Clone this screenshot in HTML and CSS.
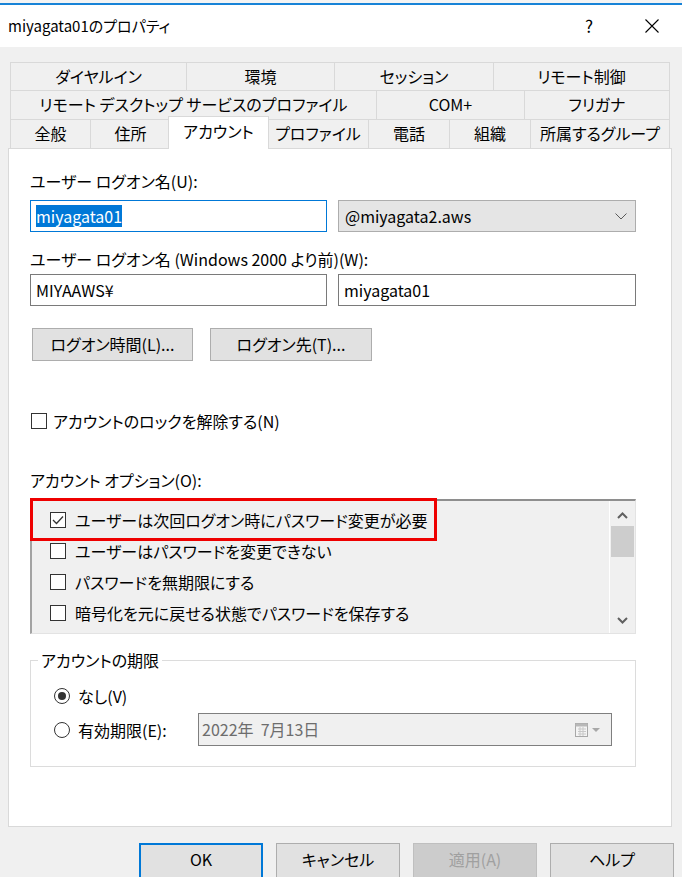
FILE: index.html
```html
<!DOCTYPE html>
<html lang="ja">
<head>
    <meta charset="UTF-8">
    <meta name="viewport" content="width=device-width, initial-scale=1.0">
    <title>miyagata01のプロパティ</title>
    <link rel="stylesheet" href="styles.css">
</head>
<body>

<div class="topedge"></div>
<div class="titlebar">
    <span class="title">miyagata01のプロパティ</span>
    <span class="help">?</span>
    <span class="close">
        <svg width="14" height="14" viewBox="0 0 14 14"><path d="M0.5 0.5 L13.5 13.5 M13.5 0.5 L0.5 13.5" stroke="#000" stroke-width="1.1" fill="none"/></svg>
    </span>
</div>

<div class="tabs">
    <div class="tabrow row1">
        <div class="tab t-dialin">ダイヤルイン</div>
        <div class="tab t-env">環境</div>
        <div class="tab t-session">セッション</div>
        <div class="tab t-remote last">リモート制御</div>
    </div>
    <div class="tabrow">
        <div class="tab t-rds">リモート デスクトップ サービスのプロファイル</div>
        <div class="tab t-com">COM+</div>
        <div class="tab t-kana last">フリガナ</div>
    </div>
    <div class="tabrow">
        <div class="tab t-general">全般</div>
        <div class="tab t-address">住所</div>
        <div class="tab t-account active">アカウント</div>
        <div class="tab t-profile">プロファイル</div>
        <div class="tab t-phone">電話</div>
        <div class="tab t-org">組織</div>
        <div class="tab t-member last">所属するグループ</div>
    </div>
</div>

<div class="panel">
    <div class="label first">ユーザー ログオン名(U):</div>
    <div class="fieldrow row-a">
        <div class="field focus"><span class="sel">miyagata01</span></div>
        <div class="field combo">
            <span>@miyagata2.aws</span>
            <svg width="12" height="7" viewBox="0 0 12 7"><polyline points="0.5,0.5 6,6 11.5,0.5" stroke="#5a5a5a" stroke-width="1" fill="none"/></svg>
        </div>
    </div>

    <div class="label second">ユーザー ログオン名 (Windows 2000 より前)(W):</div>
    <div class="fieldrow row-b">
        <div class="field">MIYAAWS¥</div>
        <div class="field">miyagata01</div>
    </div>

    <div class="btnrow">
        <div class="btn b-hours">ログオン時間(L)...</div>
        <div class="btn b-to">ログオン先(T)...</div>
    </div>

    <div class="check unlock">
        <span class="cb"></span>
        <span>アカウントのロックを解除する(N)</span>
    </div>

    <div class="label options">アカウント オプション(O):</div>
    <div class="list">
        <div class="items">
            <div class="check item">
                <span class="cb">
                    <svg width="14" height="14" viewBox="0 0 14 14"><polyline points="2,7 5.5,10.5 12,3.5" stroke="#333" stroke-width="1.3" fill="none"/></svg>
                </span>
                <span>ユーザーは次回ログオン時にパスワード変更が必要</span>
            </div>
            <div class="check item">
                <span class="cb"></span>
                <span>ユーザーはパスワードを変更できない</span>
            </div>
            <div class="check item">
                <span class="cb"></span>
                <span>パスワードを無期限にする</span>
            </div>
            <div class="check item">
                <span class="cb"></span>
                <span>暗号化を元に戻せる状態でパスワードを保存する</span>
            </div>
        </div>
        <div class="scroll">
            <svg class="arrow up" width="11" height="7" viewBox="0 0 11 7"><polyline points="1,6 5.5,1.5 10,6" stroke="#606060" stroke-width="2" fill="none"/></svg>
            <div class="thumb"></div>
            <svg class="arrow down" width="11" height="7" viewBox="0 0 11 7"><polyline points="1,1 5.5,5.5 10,1" stroke="#606060" stroke-width="2" fill="none"/></svg>
        </div>
        <div class="highlight"></div>
    </div>

    <fieldset class="group">
        <legend>アカウントの期限</legend>
        <div class="radiorow">
            <span class="radio on"></span>
            <span>なし(V)</span>
        </div>
        <div class="radiorow date-row">
            <span class="radio"></span>
            <span>有効期限(E):</span>
            <div class="date">
                <span>2022年&nbsp;&nbsp;7月13日</span>
                <span class="cal">
                    <svg width="28" height="16" viewBox="0 0 28 16">
                        <rect x="0.5" y="1.5" width="12" height="13" fill="#f4f4f4" stroke="#a8a8a8"/>
                        <rect x="0.5" y="1.5" width="12" height="3" fill="#b8b8b8"/>
                        <path d="M3 7 H11 M3 9.5 H11 M3 12 H11 M5 5 V14 M8 5 V14" stroke="#c8c8c8" stroke-width="1"/>
                        <polygon points="17,6 25,6 21,10" fill="#a8a8a8"/>
                    </svg>
                </span>
            </div>
        </div>
    </fieldset>
</div>

<div class="footer">
    <div class="btn foot default">OK</div>
    <div class="btn foot">キャンセル</div>
    <div class="btn foot disabled">適用(A)</div>
    <div class="btn foot">ヘルプ</div>
</div>

</body>
</html>
```

FILE: styles.css
```css
* {
    box-sizing: border-box;
}
body {
    margin: 0;
    width: 682px;
    height: 877px;
    overflow: hidden;
    background: #f0f0f0;
    font-family: "Noto Sans CJK JP", "Noto Sans", sans-serif;
    font-size: 16px;
    font-feature-settings: "palt";
    color: #000;
}
.topedge {
    height: 5px;
    background: #f4f4f4;
    border-bottom: 2px solid #1883d7;
}
.titlebar {
    height: 42px;
    background: white;
    display: flex;
    align-items: center;
}
.title {
    flex: 1;
    padding-left: 8px;
    font-size: 15px;
    padding-bottom: 2px;
}
.help {
    width: 30px;
    text-align: center;
    font-size: 17px;
    padding-bottom: 2px;
}
.close {
    width: 46px;
    margin: 0 7px 0 25px;
    display: flex;
    justify-content: center;
}

/* tabs */
.tabs {
    margin: 15px 0 0 10px;
    width: 660px;
}
.tabrow {
    display: flex;
    height: 29px;
}
.tabrow.row1 {
    height: 28px;
}
.tab {
    border-top: 1px solid #d9d9d9;
    border-left: 1px solid #d9d9d9;
    display: flex;
    align-items: center;
    justify-content: center;
    white-space: nowrap;
    padding-bottom: 2px;
}
.tab.last {
    border-right: 1px solid #d9d9d9;
}
.tab.active {
    background: white;
    border: 1px solid #d9d9d9;
    border-bottom: none;
    height: 33px;
    margin: -3px -2px 0 -2px;
    position: relative;
    z-index: 1;
    padding-bottom: 4px;
}
.t-dialin { width: 176px; }
.t-env { width: 148px; }
.t-session { width: 159px; }
.t-remote { width: 177px; }
.t-rds { width: 366px; }
.t-com { width: 148px; }
.t-kana { width: 146px; }
.t-general { width: 80px; }
.t-address { width: 80px; }
.t-account { width: 101px; }
.t-profile { width: 101px; }
.t-phone { width: 81px; }
.t-org { width: 81px; }
.t-member { width: 140px; }

/* panel */
.panel {
    margin: 0 10px 0 8px;
    height: 679px;
    background: white;
    border: 1px solid #d9d9d9;
    padding-left: 21px;
}
.label {
    line-height: 20px;
    height: 20px;
}
.label.first { margin-top: 22px; }
.label.second { margin-top: 17px; }
.label.options { margin-top: 39px; }
.fieldrow {
    display: flex;
    gap: 11px;
}
.row-a { margin-top: 9px; }
.row-b { margin-top: 5px; }
.field {
    width: 297px;
    height: 32px;
    border: 1px solid #7a7a7a;
    background: white;
    padding: 0 5px;
    display: flex;
    align-items: center;
}
.field + .field {
    width: 298px;
}
.field.focus {
    border-color: #0078d7;
}
.sel {
    background: #0078d7;
    color: white;
    line-height: 22px;
}
.combo {
    background: #e5e5e5;
    border-color: #adadad;
    justify-content: space-between;
    padding: 0 8px 0 6px;
}
.btnrow {
    display: flex;
    gap: 17px;
    margin: 22px 0 0 2px;
}
.btn {
    height: 33px;
    border: 1px solid #adadad;
    background: #e1e1e1;
    display: flex;
    align-items: center;
    justify-content: center;
    padding-bottom: 2px;
}
.b-hours { width: 161px; }
.b-to { width: 162px; }

.check {
    display: flex;
    align-items: center;
    gap: 6px;
    line-height: 20px;
}
.unlock {
    margin: 50px 0 0 1px;
}
.cb {
    width: 16px;
    height: 16px;
    border: 1px solid #333;
    background: white;
    display: flex;
    align-items: center;
    justify-content: center;
    flex-shrink: 0;
}

/* account options list */
.list {
    position: relative;
    margin-top: 9px;
    width: 606px;
    height: 135px;
    border-top: 2px solid #8e8e8e;
    border-left: 2px solid #a3a3a3;
    border-right: 1px solid #e3e3e3;
    border-bottom: 1px solid #e3e3e3;
    background: #f0f0f0;
    display: flex;
}
.items {
    flex: 1;
    padding: 3px 0 0 18px;
}
.item {
    height: 31px;
    gap: 9px;
}
.scroll {
    width: 26px;
    border-left: 1px solid white;
    display: flex;
    flex-direction: column;
    align-items: center;
}
.arrow.up {
    margin-top: 11px;
}
.thumb {
    width: 23px;
    height: 31px;
    background: #cdcdcd;
    margin-top: 7px;
}
.arrow.down {
    margin-top: auto;
    margin-bottom: 9px;
}
.highlight {
    position: absolute;
    left: -2px;
    top: -3px;
    width: 407px;
    height: 43px;
    border: 3px solid #ee0000;
}

/* account expiry */
.group {
    margin: 16px 0 0 0;
    width: 606px;
    border: 1px solid #dcdcdc;
    padding: 14px 23px 20px 23px;
}
.group legend {
    margin-left: -16px;
    padding: 0 3px;
    line-height: 20px;
}
.radiorow {
    display: flex;
    align-items: center;
    height: 24px;
    gap: 8px;
}
.radio {
    width: 16px;
    height: 16px;
    border: 1px solid #333;
    border-radius: 50%;
    background: white;
    display: flex;
    align-items: center;
    justify-content: center;
}
.radio.on::after {
    content: "";
    width: 8px;
    height: 8px;
    border-radius: 50%;
    background: #333;
}
.date-row {
    height: 33px;
    margin-top: 5px;
}
.date {
    margin-left: auto;
    width: 414px;
    height: 33px;
    border: 1px solid #7f7f7f;
    background: #f0f0f0;
    color: #6d6d6d;
    display: flex;
    align-items: center;
    justify-content: space-between;
    padding: 0 8px 2px 3px;
}
.cal {
    display: flex;
    padding-top: 2px;
}

/* bottom buttons */
.footer {
    display: flex;
    gap: 13px;
    padding-left: 139px;
    margin-top: 16px;
}
.btn.foot {
    width: 124px;
    height: 40px;
    padding-bottom: 8px;
}
.btn.default {
    border: 2px solid #0078d7;
}
.btn.disabled {
    background: #cccccc;
    border-color: #bfbfbf;
    color: #a0a0a0;
}
```
